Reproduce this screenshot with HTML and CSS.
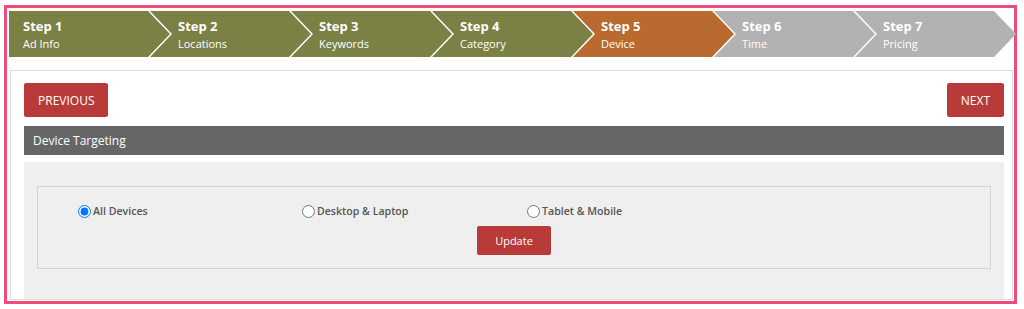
FILE: index.html
```html
<!DOCTYPE html>
<html>
<head>
  <meta charset="UTF-8">
  <title>Create Ad - Device</title>
  <link rel="stylesheet" href="styles.css">
</head>
<body>
<div class="frame">
  <div class="steps">
    <div class="step done first"><b>Step 1</b><span>Ad Info</span></div>
    <div class="step done"><b>Step 2</b><span>Locations</span></div>
    <div class="step done"><b>Step 3</b><span>Keywords</span></div>
    <div class="step done"><b>Step 4</b><span>Category</span></div>
    <div class="step current"><b>Step 5</b><span>Device</span></div>
    <div class="step"><b>Step 6</b><span>Time</span></div>
    <div class="step"><b>Step 7</b><span>Pricing</span></div>
  </div>

  <div class="panel">
    <div class="nav">
      <button class="btn">PREVIOUS</button>
      <button class="btn">NEXT</button>
    </div>
    <div class="section-head">Device Targeting</div>
    <div class="section-body">
      <div class="box">
        <div class="options">
          <label class="opt"><input type="radio" name="device" checked> All Devices</label>
          <label class="opt"><input type="radio" name="device"> Desktop &amp; Laptop</label>
          <label class="opt"><input type="radio" name="device"> Tablet &amp; Mobile</label>
        </div>
        <div class="actions">
          <button class="btn btn-sm">Update</button>
        </div>
      </div>
    </div>
  </div>
</div>
</body>
</html>
```

FILE: styles.css
```css
body { margin: 0; background: #fff; font-family: "Open Sans", "Liberation Sans", sans-serif; color: #555; }

.frame { box-sizing: border-box; width: 1013px; height: 299px; margin: 5px 0 0 4px; border: 3px solid #ee4c79; padding: 3px 0 0 2px; }

/* wizard steps */
.steps { display: flex; height: 46px; }
.step { flex: none; box-sizing: border-box; width: 161px; margin-right: -20px; padding: 7px 0 0 28px; background: #b2b2b2; color: #fff;
  clip-path: polygon(0 0, calc(100% - 22px) 0, 100% 50%, calc(100% - 22px) 100%, 0 100%, 22px 50%); }
.step.first { padding-left: 14px; clip-path: polygon(0 0, calc(100% - 22px) 0, 100% 50%, calc(100% - 22px) 100%, 0 100%); }
.step.done { background: #7b8044; }
.step.current { background: #b96a2f; }
.step b { display: block; font-size: 13px; line-height: 17px; font-weight: 700; }
.step span { display: block; font-size: 11px; line-height: 17px; }

/* main panel */
.panel { box-sizing: border-box; width: 1003px; height: 230px; margin: 13px 0 0 1px; border: 1px solid #ddd; padding: 12px 8px 0 13px; display: flex; flex-direction: column; }
.nav { display: flex; justify-content: space-between; }
.btn { height: 34px; padding: 0 14px; border: 0; border-radius: 2px; background: #b83b39; color: #fff; font-family: inherit; font-size: 12px; cursor: pointer; }
.btn-sm { height: 29px; padding: 0 18px; font-size: 11px; }

.section-head { margin-top: 9px; height: 29px; line-height: 29px; padding-left: 9px; background: #666; color: #fff; font-size: 12px; }
.section-body { flex: 1; margin-top: 7px; background: #efefef; padding: 24px 13px 0; }
.box { height: 83px; box-sizing: border-box; border: 1px solid #d4d4d4; }

.options { display: grid; grid-template-columns: 224px 225px 225px; padding: 16px 0 0 40px; }
.opt { display: flex; align-items: center; gap: 2px; font-size: 10.6px; font-weight: 600; color: #555; line-height: 16px; }
.opt input { margin: 0; width: 13px; height: 13px; }
.actions { display: flex; justify-content: center; margin-top: 7px; }
```
